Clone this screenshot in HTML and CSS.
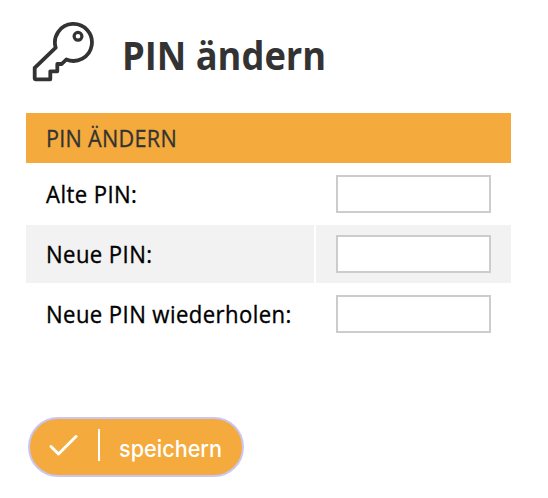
FILE: index.html
```html
<!DOCTYPE html>
<html lang="de">
<head>
<meta charset="utf-8">
<title>PIN ändern</title>
<link rel="stylesheet" href="styles.css">
</head>
<body>
<main class="page">
  <header class="heading">
    <svg class="key" viewBox="0 0 64 64" aria-hidden="true">
      <path d="M3.7 47.8 24.7 27.7A18.5 18.5 0 1 1 35.3 39.5L30.7 44H26.3V51.3H19.3V59.3H4.7Q3.7 59.3 3.7 58.3Z"/>
      <circle cx="47" cy="16.3" r="3.9"/>
    </svg>
    <h1><span>PIN ändern</span></h1>
  </header>
  <form class="form">
    <div class="caption"><span>PIN ÄNDERN</span></div>
    <div class="row"><label for="old"><span>Alte PIN:</span></label><div class="cell"><input id="old" type="password"></div></div>
    <div class="row shaded"><label for="new"><span>Neue PIN:</span></label><div class="cell"><input id="new" type="password"></div></div>
    <div class="row"><label for="rep"><span>Neue PIN wiederholen:</span></label><div class="cell"><input id="rep" type="password"></div></div>
    <button class="save" type="button">
      <svg class="check" viewBox="0 0 30 24" aria-hidden="true"><path d="M2 12.5 9.5 20 27 2.5"/></svg>
      <span class="divider"></span>
      <span class="save-text">speichern</span>
    </button>
  </form>
</main>
</body>
</html>
```
FILE: styles.css
```css
* { box-sizing: border-box; }
body { margin: 0; background: #fff; color: #000; font: 500 23.5px/30px "Open Sans", sans-serif; }
.page { padding: 20px 37px 0 26px; height: 498px; }
.heading { display: flex; height: 93px; padding-left: 5px; }
.key { width: 64px; height: 64px; fill: none; stroke: #333; stroke-width: 3.8; stroke-linejoin: round; }
.key circle { stroke-width: 3.2; }
h1 { margin: 10px 0 0 27px; font-size: 40px; line-height: 50px; font-weight: 700; color: #333; }
h1 span, .caption span, label span, .save-text { display: inline-block; transform-origin: left; white-space: nowrap; }
h1 span { transform: scaleX(.907); }
.caption { height: 50px; padding: 10px 20px; background: #f4aa3c; color: #333; }
.caption span { transform: scaleX(.92); letter-spacing: .3px; -webkit-text-stroke: .3px #333; }
.row { display: grid; grid-template-columns: 288px 195px; gap: 2px; height: 58px; margin-top: 2px; }
.row.shaded label, .row.shaded .cell { background: #f2f2f2; }
label { padding: 14px 20px; }
label span { transform: scaleX(.94); letter-spacing: .45px; -webkit-text-stroke: .35px #000; }
.cell { padding: 10px 20px; }
input { display: block; width: 155px; height: 38px; border: 2px solid #ccc; background: #fff; padding: 4px; }
.save { display: flex; align-items: center; width: 216px; height: 60px; margin: 74px 0 0 2px; padding: 0 19px; border: 2px solid #c9c6f4; border-radius: 30px; background: #f4aa3c; color: #fff; font: 500 23px/30px Inter, sans-serif; }
.check { width: 30px; height: 24px; margin-top: -3px; flex: none; fill: none; stroke: #fff; stroke-width: 3; stroke-linecap: round; stroke-linejoin: round; }
.divider { width: 2px; height: 32px; margin: 0 19px 4px; background: #fff; flex: none; }
.save-text { margin-top: 3px; transform: scaleX(.94); }
```
